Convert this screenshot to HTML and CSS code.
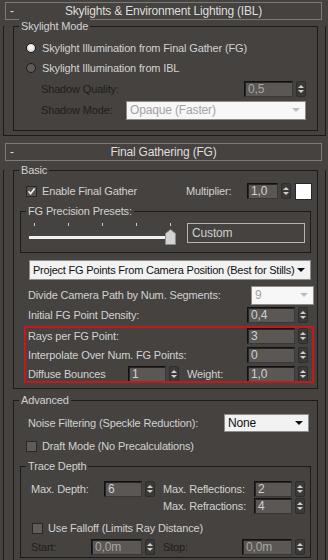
FILE: index.html
```html
<!DOCTYPE html>
<html lang="en">
<head>
  <meta charset="UTF-8">
  <title>Final Gathering</title>
  <link rel="stylesheet" href="styles.css">
</head>
<body>

<div class="rollout">
  <div class="rollout-head"><span class="minus">-</span><span>Skylights &amp; Environment Lighting (IBL)</span><span></span></div>
  <div class="rollout-body first">
    <div class="group sky">
      <div class="group-title">Skylight Mode</div>
      <div class="row opt lead"><span class="radio on"></span><span>Skylight Illumination from Final Gather (FG)</span></div>
      <div class="row opt"><span class="radio"></span><span>Skylight Illumination from IBL</span></div>
      <div class="row sub off">
        <span>Shadow Quality:</span>
        <span class="spin push"><span class="field w49">0,5</span><span class="arrows"></span></span>
      </div>
      <div class="row sub off">
        <span>Shadow Mode:</span>
        <span class="drop dim push w180"><span>Opaque (Faster)</span></span>
      </div>
    </div>
  </div>
</div>

<div class="rollout">
  <div class="rollout-head"><span class="minus">-</span><span>Final Gathering (FG)</span><span></span></div>
  <div class="rollout-body">
    <div class="group basic">
      <div class="group-title">Basic</div>
      <div class="row enable">
        <span class="check on"><svg width="9" height="9" viewBox="0 0 9 9"><path d="M1.5 4.3 3.6 6.8 7.6 1.6" fill="none" stroke="#f2f2f2" stroke-width="1.6"/></svg></span>
        <span>Enable Final Gather</span>
        <span class="mult push">Multiplier:</span>
        <span class="spin"><span class="field w31">1,0</span><span class="arrows"></span></span>
        <span class="swatch"></span>
      </div>

      <div class="group inner presets">
        <div class="group-title">FG Precision Presets:</div>
        <div class="preset-row">
          <svg class="slider" width="150" height="24" viewBox="0 0 150 24">
            <path d="M7.5 2v3M41.5 2v3M75.5 2v3M109.5 2v3M143.5 2v3" stroke="#d0cdc9" stroke-width="1"/>
            <rect x="2" y="15" width="140" height="3" fill="#efefef"/>
            <path d="M138.5 12.5 143.5 8.5 148.5 12.5V23.5H138.5Z" fill="#d2d2d2" stroke="#8c8a87"/>
          </svg>
          <div class="preset-name">Custom</div>
        </div>
      </div>

      <div class="drop project"><span>Project FG Points From Camera Position (Best for Stills)</span></div>

      <div class="row param divide">
        <span>Divide Camera Path by Num. Segments:</span>
        <span class="drop dim push w63"><span>9</span></span>
      </div>
      <div class="row param">
        <span>Initial FG Point Density:</span>
        <span class="spin push"><span class="field w48">0,4</span><span class="arrows"></span></span>
      </div>

      <div class="highlight">
        <div class="row hl">
          <span>Rays per FG Point:</span>
          <span class="spin push"><span class="field w48">3</span><span class="arrows"></span></span>
        </div>
        <div class="row hl">
          <span>Interpolate Over Num. FG Points:</span>
          <span class="spin push"><span class="field w48">0</span><span class="arrows"></span></span>
        </div>
        <div class="row hl">
          <span class="bounce-label">Diffuse Bounces</span>
          <span class="spin"><span class="field w38">1</span><span class="arrows"></span></span>
          <span class="weight-label">Weight:</span>
          <span class="spin push"><span class="field w48">1,0</span><span class="arrows"></span></span>
        </div>
      </div>
    </div>

    <div class="group advanced">
      <div class="group-title">Advanced</div>
      <div class="row noise">
        <span>Noise Filtering (Speckle Reduction):</span>
        <span class="drop push w85"><span>None</span></span>
      </div>
      <div class="row draft">
        <span class="check"></span>
        <span>Draft Mode (No Precalculations)</span>
      </div>

      <div class="group inner trace">
        <div class="group-title">Trace Depth</div>
        <div class="row depth">
          <span class="lab-depth">Max. Depth:</span>
          <span class="spin"><span class="field w38">6</span><span class="arrows"></span></span>
          <span class="lab-refl">Max. Reflections:</span>
          <span class="spin"><span class="field w38">2</span><span class="arrows"></span></span>
        </div>
        <div class="row depth">
          <span class="lab-gap"></span>
          <span class="lab-refl">Max. Refractions:</span>
          <span class="spin"><span class="field w38">4</span><span class="arrows"></span></span>
        </div>
        <div class="row falloff">
          <span class="check"></span>
          <span>Use Falloff (Limits Ray Distance)</span>
        </div>
        <div class="row range off">
          <span class="lab-start">Start:</span>
          <span class="spin"><span class="field w51">0,0m</span><span class="arrows"></span></span>
          <span class="lab-stop">Stop:</span>
          <span class="spin"><span class="field w50">0,0m</span><span class="arrows"></span></span>
        </div>
      </div>
    </div>
  </div>
</div>

</body>
</html>
```

FILE: styles.css
```css
body {
  margin: 0;
  padding: 2px 0 0;
  height: 560px;
  box-sizing: border-box;
  overflow: hidden;
  background-color: #45423f;
  color: #d2d2d2;
  font-family: "Liberation Sans", Arial, sans-serif;
  font-size: 11px;
  letter-spacing: -0.15px;
}

/* rollouts */
.rollout + .rollout {
  margin-top: 7px;
}

.rollout-head {
  display: grid;
  grid-template-columns: 1fr auto 1fr;
  align-items: center;
  height: 18px;
  box-sizing: border-box;
  margin: 0 6px 0 5px;
  border: 1px solid #7c7a77;
  color: #dedede;
  font-size: 12px;
  line-height: 16px;
  letter-spacing: -0.2px;
}

.minus {
  padding-left: 4px;
}

.rollout-body {
  margin: -8px 2px 0 3px;
  border: 1px solid #1c1b1a;
  border-top: none;
}

.rollout-body.first {
  padding-bottom: 4px;
}

/* group boxes */
.group {
  margin: 14px 7px 0 9px;
  border: 1px solid #1c1b1a;
}

.group-title {
  width: fit-content;
  height: 14px;
  margin: -8px 0 0 5px;
  padding: 0 2px;
  background-color: #45423f;
  line-height: 14px;
}

.group.basic {
  margin-top: 17px;
  padding-bottom: 5px;
}

.group.advanced {
  margin-top: 11px;
  padding-bottom: 10px;
}

.group.inner {
  margin: 10px 6px 0 6px;
}

.sky {
  padding-bottom: 10px;
}

/* rows */
.row {
  display: flex;
  align-items: center;
  height: 20px;
  white-space: nowrap;
}

.push {
  margin-left: auto;
}

.off {
  color: #201e1c;
}

.opt {
  gap: 6px;
  padding-left: 12px;
}

.opt.lead {
  margin-top: 5px;
}

.sub {
  margin-top: 1px;
  padding: 0 11px 0 27px;
}

.enable {
  margin-top: 4px;
  padding: 0 5px 0 12px;
}

.param {
  padding: 0 9px 0 14px;
}

.param.divide {
  margin-top: 5px;
  padding-right: 6px;
}

.highlight {
  margin: 1px 3px 0 10px;
  outline: 2px solid #c8161d;
  outline-offset: -2px;
}

.row.hl {
  height: 19px;
  padding: 0 6px 0 4px;
}

.bounce-label {
  width: 100px;
}

.weight-label {
  margin-left: 8px;
}

.noise {
  height: 19px;
  margin-top: 6px;
  padding: 0 8px 0 14px;
}

.draft {
  margin-top: 4px;
  padding-left: 12px;
}

.trace {
  margin-top: 8px;
  margin-right: 4px;
  padding-bottom: 1px;
}

.depth {
  height: 17px;
  padding-left: 10px;
}

.trace .group-title + .depth {
  margin-top: 7px;
}

.lab-depth {
  width: 73px;
}

.lab-gap {
  width: 132px;
}

.lab-refl {
  width: 91px;
  margin-left: 8px;
}

.lab-gap + .lab-refl {
  margin-left: 0;
}

.falloff {
  height: 18px;
  margin-top: 5px;
  padding-left: 11px;
}

.range {
  height: 19px;
  padding-left: 10px;
}

.lab-start {
  width: 60px;
}

.lab-stop {
  width: 79px;
  margin-left: 8px;
}

/* controls */
.radio {
  width: 10px;
  height: 10px;
  box-sizing: border-box;
  border: 1px solid #1e1d1c;
  border-radius: 50%;
  background-color: #5e5b58;
}

.radio.on {
  background: radial-gradient(circle at 45% 40%, #ffffff 0, #dcdcdc 60%, #b8b8b8 100%);
}

.check {
  display: flex;
  align-items: center;
  justify-content: center;
  width: 11px;
  height: 11px;
  box-sizing: border-box;
  margin-right: 5px;
  border: 1px solid #2a2826;
  background-color: #5f5c59;
}

.check.on {
  background-color: #55524f;
}

.spin {
  display: flex;
  align-items: center;
  gap: 3px;
}

.field {
  height: 16px;
  box-sizing: border-box;
  padding-left: 3px;
  border: 1px solid #121110;
  border-right-color: #3a3836;
  border-bottom-color: #3a3836;
  box-shadow: inset 1px 1px 0 #262523;
  background-color: #5a5754;
  color: #d2d2d2;
  font-size: 12px;
  line-height: 14px;
}

.off .field {
  color: #a9a7a4;
}

.arrows {
  display: flex;
  flex-direction: column;
  align-items: center;
  justify-content: center;
  gap: 2px;
  width: 10px;
  height: 16px;
  box-sizing: border-box;
  border: 1px solid #2f2d2b;
  border-radius: 2px;
  background-color: #3c3a37;
}

.arrows::before,
.arrows::after {
  content: "";
  border-left: 3px solid transparent;
  border-right: 3px solid transparent;
}

.arrows::before {
  border-bottom: 3px solid #cfcfcf;
}

.arrows::after {
  border-top: 3px solid #cfcfcf;
}

.w31 { width: 31px; }
.w38 { width: 38px; }
.w48 { width: 48px; }
.w49 { width: 49px; }
.w50 { width: 50px; }
.w51 { width: 51px; }
.w63 { width: 63px; margin-right: -3px; }
.w85 { width: 85px; }
.w180 { width: 180px; }

.drop {
  display: flex;
  align-items: center;
  height: 18px;
  box-sizing: border-box;
  padding-left: 3px;
  border: 1px solid #8f8d8a;
  background-color: #f2f2f2;
  color: #111111;
  font-size: 12px;
  white-space: nowrap;
}

.drop::after {
  content: "";
  margin: 0 5px 0 auto;
  border-top: 4px solid #111111;
  border-left: 4px solid transparent;
  border-right: 4px solid transparent;
}

.drop.dim {
  height: 19px;
  background-color: #f7f7f7;
  color: #a3a3a3;
}

.drop.dim::after {
  border-top-color: #bdbdbd;
}

.drop.project {
  height: 20px;
  margin: 7px 6px 0 15px;
  font-size: 11px;
  letter-spacing: -0.22px;
}

.swatch {
  width: 17px;
  height: 17px;
  box-sizing: border-box;
  margin-left: 4px;
  border: 1px solid #2a2826;
  background-color: #ffffff;
}

.mult {
  width: 61px;
}

/* presets slider */
.preset-row {
  display: flex;
  align-items: flex-start;
  height: 34px;
  padding-left: 6px;
}

.slider {
  display: block;
  margin-top: 3px;
}

.preset-name {
  width: 118px;
  height: 20px;
  box-sizing: border-box;
  margin: 5px 0 0 10px;
  padding-left: 4px;
  border: 1px solid #b7b5b2;
  color: #cfcfcf;
  font-size: 12px;
  line-height: 18px;
}
```
